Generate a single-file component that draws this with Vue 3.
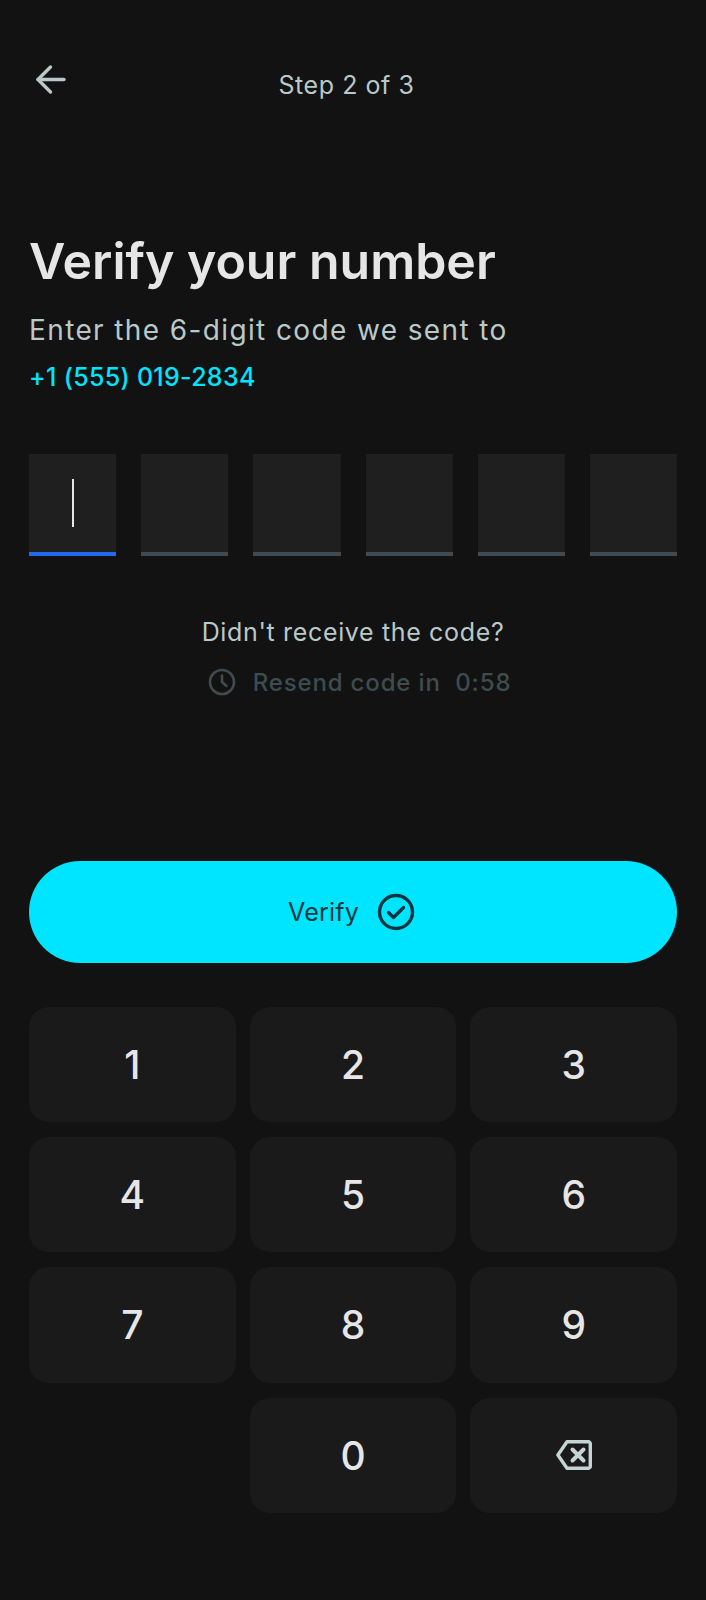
<script setup>
const boxes = [0, 1, 2, 3, 4, 5]
const keys = ['1', '2', '3', '4', '5', '6', '7', '8', '9', '', '0', 'back']
</script>

<template>
  <div class="screen">
    <header class="top">
      <button class="back" type="button" aria-label="Back">
        <svg width="34" height="34" viewBox="0 0 34 34" fill="none" stroke="#b9c9c9" stroke-width="3.4" stroke-linecap="round" stroke-linejoin="round">
          <path d="M30 16.5H4" />
          <path d="M16.5 4 4 16.5 16.5 29" />
        </svg>
      </button>
      <span class="step">Step 2 of 3</span>
    </header>

    <h1 class="title">Verify your number</h1>
    <p class="sub">Enter the 6-digit code we sent to</p>
    <p class="phone">+1 (555) 019-2834</p>

    <div class="code">
      <div v-for="i in boxes" :key="i" class="box" :class="{ active: i === 0 }">
        <i v-if="i === 0" class="cursor"></i>
      </div>
    </div>

    <p class="ask">Didn't receive the code?</p>
    <div class="resend">
      <svg width="28" height="28" viewBox="0 0 28 28" fill="none" stroke="#3e4c4f" stroke-width="2.6" stroke-linecap="round" stroke-linejoin="round">
        <circle cx="14" cy="14" r="12" />
        <path d="M14 7.5V14l4.5 4" />
      </svg>
      <span>Resend code in&nbsp; 0:58</span>
    </div>

    <button class="verify" type="button">
      <span>Verify</span>
      <svg width="38" height="38" viewBox="0 0 38 38" fill="none" stroke="#00363f" stroke-width="3.4" stroke-linecap="round" stroke-linejoin="round">
        <circle cx="19" cy="19" r="16.5" />
        <path d="M11.5 19.5l5 5 10-10" />
      </svg>
    </button>

    <div class="pad">
      <template v-for="k in keys" :key="k">
        <div v-if="k === ''" class="blank"></div>
        <button v-else class="key" type="button">
          <svg v-if="k === 'back'" width="36" height="30" viewBox="0 0 36 30" fill="none" stroke="#c5d4d4" stroke-width="3.4" stroke-linejoin="round" stroke-linecap="round">
            <path d="M11 1.8h21.5a1.8 1.8 0 0 1 1.8 1.8v22.8a1.8 1.8 0 0 1-1.8 1.8H11L1.9 15z" />
            <path d="M16.5 9.5l11 11M27.5 9.5l-11 11" stroke-width="4" />
          </svg>
          <template v-else>{{ k }}</template>
        </button>
      </template>
    </div>
  </div>
</template>

<style>
html,
body {
  margin: 0;
  background: #121212;
}
</style>

<style scoped>
.screen {
  width: 706px;
  height: 1600px;
  box-sizing: border-box;
  padding: 0 29px;
  background: #121212;
  font-family: Inter, "Liberation Sans", sans-serif;
}

.top {
  position: relative;
  height: 172px;
  padding: 63px 13px 0 0;
  box-sizing: border-box;
  text-align: center;
}

.back {
  position: absolute;
  left: 5px;
  top: 63px;
  padding: 0;
  border: 0;
  background: none;
  line-height: 0;
}

.step {
  display: block;
  font-size: 25px;
  line-height: 44px;
  letter-spacing: 0.55px;
  color: #b9c9c9;
}

.title {
  margin: 59px 0 0;
  font-size: 50px;
  line-height: 60px;
  font-weight: 600;
  color: #e6e6e6;
}

.sub {
  margin: 19px 0 0;
  font-size: 28px;
  line-height: 40px;
  letter-spacing: 1.38px;
  color: #b9c9c9;
}

.phone {
  margin: 7px 0 0;
  font-size: 25px;
  line-height: 40px;
  letter-spacing: 0.3px;
  font-weight: 500;
  color: #00e5ff;
}

.code {
  display: flex;
  gap: 25px;
  margin-top: 57px;
}

.box {
  flex: 1;
  height: 102px;
  box-sizing: border-box;
  display: flex;
  align-items: center;
  justify-content: center;
  background: #1f1f1f;
  border-bottom: 4px solid #3f4b50;
}

.box.active {
  border-bottom-color: #2468ee;
}

.cursor {
  width: 2.5px;
  height: 48px;
  margin-left: 1px;
  background: #e6e6e6;
}

.ask {
  margin: 56px 0 0;
  text-align: center;
  font-size: 25px;
  line-height: 40px;
  letter-spacing: 0.65px;
  color: #b9c9c9;
}

.resend {
  display: flex;
  align-items: center;
  justify-content: center;
  gap: 17px;
  margin-top: 10px;
  padding-left: 13px;
  height: 40px;
  font-size: 24px;
  font-weight: 500;
  letter-spacing: 0.85px;
  color: #3e4c4f;
}

.verify {
  width: 100%;
  height: 102px;
  margin-top: 159px;
  padding: 0 3px 0 0;
  display: flex;
  align-items: center;
  justify-content: center;
  gap: 18px;
  border: 0;
  border-radius: 51px;
  background: #00e5ff;
  font-family: inherit;
  font-size: 25px;
  letter-spacing: 0.2px;
  color: #00363f;
}

.pad {
  display: grid;
  grid-template-columns: repeat(3, 1fr);
  grid-auto-rows: 115.4px;
  column-gap: 14px;
  row-gap: 15px;
  margin-top: 43.5px;
}

.key {
  display: flex;
  align-items: center;
  justify-content: center;
  padding: 0;
  border: 0;
  border-radius: 20px;
  background: #1a1a1a;
  font-family: inherit;
  font-size: 39px;
  font-weight: 500;
  color: #e6e6e6;
}
</style>
